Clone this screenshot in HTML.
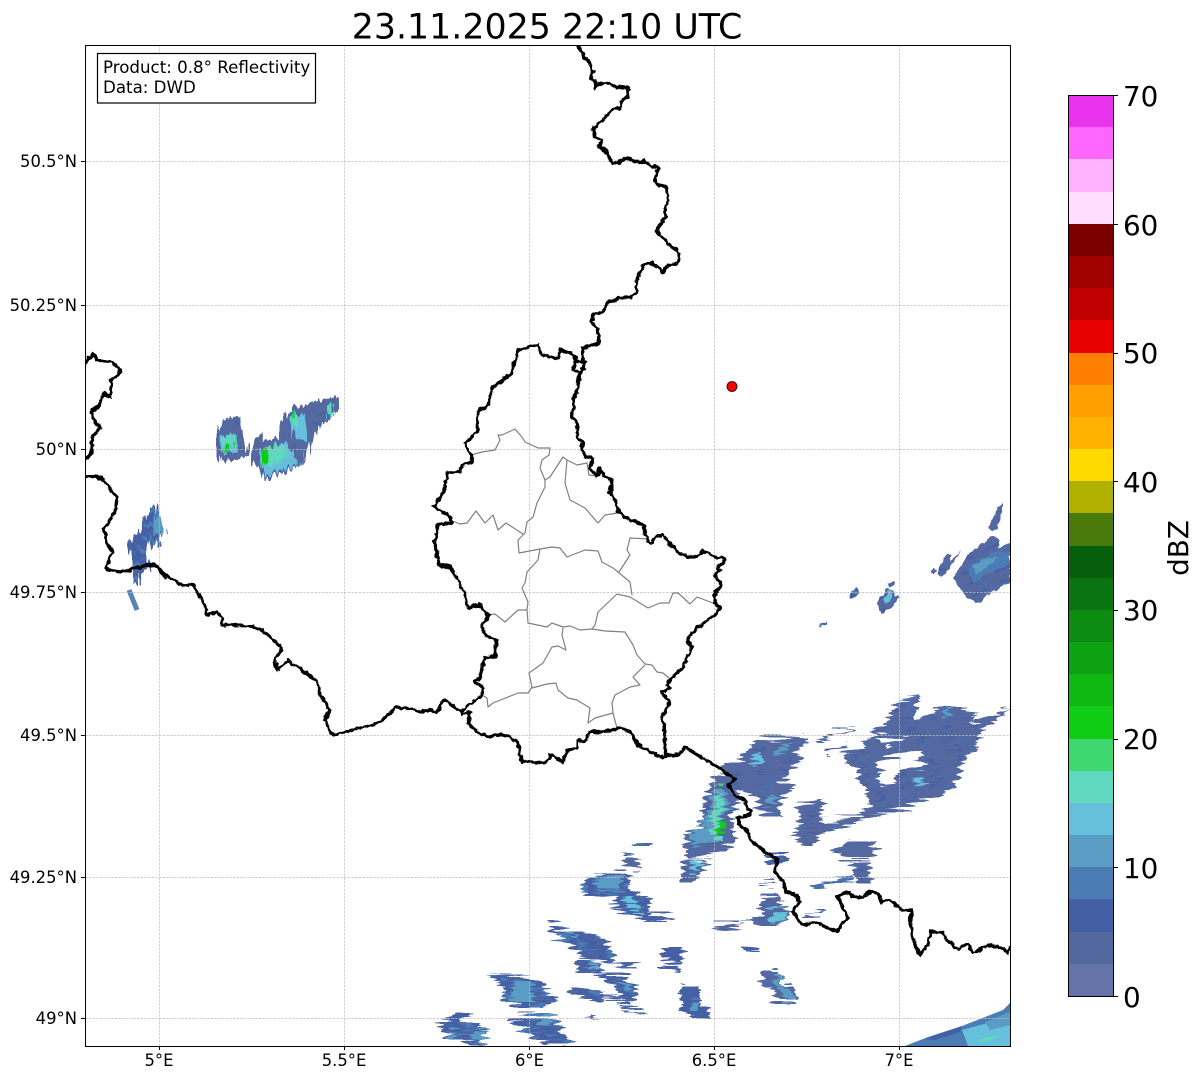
<!DOCTYPE html>
<html><head><meta charset="utf-8"><style>
html,body{margin:0;padding:0;background:#fff}
svg{display:block}
text{font-family:"DejaVu Sans",sans-serif;fill:#000}
.gr line{stroke:#bcbcbc;stroke-width:.7;stroke-dasharray:2.5 1.2}
.tk line{stroke:#000;stroke-width:1}
.bd{fill:none;stroke:#000;stroke-width:3.2;stroke-linejoin:round;stroke-linecap:round}
.pv{fill:none;stroke:#808080;stroke-width:1.2;stroke-linejoin:round}
.a{fill:url(#ph)}.r{fill:url(#pr)}.s{fill:url(#ps)}
.b{fill:#4460a4}.c{fill:#4c7cb4}.d{fill:#5a9cc4}.e{fill:#66c0dc}.f{fill:#60d8c0}.g{fill:#10cc14}.h{fill:#3fd870}
.l{fill:none;stroke:#4e66a4;stroke-width:2.5}
</style></head><body>
<svg width="1202" height="1081" viewBox="0 0 1202 1081" xmlns="http://www.w3.org/2000/svg">
<defs>
<pattern id="ph" width="26" height="12" patternUnits="userSpaceOnUse"><rect width="26" height="12" fill="#5468a0"/><rect y="3" width="12" height="2" fill="#4460a4"/><rect x="12" y="8" width="10" height="2" fill="#4c6eac"/></pattern>
<pattern id="pr" width="30" height="12" patternUnits="userSpaceOnUse" patternTransform="rotate(-25)"><rect width="30" height="12" fill="#5468a0"/><rect y="2" width="16" height="2" fill="#4460a4"/><rect x="8" y="8" width="16" height="2" fill="#4c70ae"/></pattern>
<pattern id="ps" width="30" height="14" patternUnits="userSpaceOnUse" patternTransform="rotate(18)"><rect width="30" height="14" fill="#4460a4"/><rect y="3" width="22" height="4" fill="#4c7cb4"/><rect x="6" y="10" width="20" height="2" fill="#5468a0"/></pattern>
<clipPath id="ax"><rect x="85.5" y="45.5" width="925" height="1001"/></clipPath>
<filter id="fh" filterUnits="userSpaceOnUse" x="85" y="45" width="926" height="1002"><feTurbulence type="fractalNoise" baseFrequency="0.02 0.3" numOctaves="2" seed="4" result="n"/><feDisplacementMap in="SourceGraphic" in2="n" scale="20" xChannelSelector="R" yChannelSelector="G"/></filter>
<filter id="fv" filterUnits="userSpaceOnUse" x="85" y="45" width="926" height="1002"><feTurbulence type="fractalNoise" baseFrequency="0.3 0.03" numOctaves="2" seed="7" result="n"/><feDisplacementMap in="SourceGraphic" in2="n" scale="14" xChannelSelector="G" yChannelSelector="R"/></filter>
<filter id="fw" filterUnits="userSpaceOnUse" x="85" y="45" width="926" height="1002"><feTurbulence type="fractalNoise" baseFrequency="0.18" numOctaves="2" seed="3" result="n"/><feDisplacementMap in="SourceGraphic" in2="n" scale="5" xChannelSelector="R" yChannelSelector="G"/></filter>
</defs>
<rect width="1202" height="1081" fill="#fff"/>
<g clip-path="url(#ax)">
<!-- radar -->
<g filter="url(#fv)">
<polygon class="a" points="221,418 241,417 243,435 247,445 247,455 236,460 225,462 224,457 219,463 217,447 219,428"/>
<polygon class="e" points="220,436 237,434 238,452 224,455 221,448"/>
<polygon class="f" points="221,438 232,436 234,446 224,448"/>
<rect class="g" x="225" y="444" width="6" height="9"/>
<polygon class="a" points="252,450 256,440 262,432 265,440 277,438 280,425 285,420 288,408 305,405 320,400 337,397 339,410 330,417 322,425 315,435 308,447 303,465 280,473 263,482 260,470 252,462"/>
<polygon class="e" points="260,449 285,442 295,452 300,464 280,470 264,478"/>
<polygon class="f" points="262,448 282,444 288,456 270,466 264,462"/>
<polygon class="e" points="288,415 306,413 308,440 296,440"/>
<polygon class="f" points="288,414 296,414 298,425 292,428"/>
<rect x="263" y="448" width="5" height="16" class="g"/><rect x="290" y="413" width="5" height="8" class="g"/>
<polygon class="f" points="326,404 335,404 334,417 328,418"/>
<polygon class="s" points="128,543 142,530 145,518 150,507 155,505 165,532 157,537 160,546 155,547 153,540 148,553 151,567 140,572 140,585 136,585 133,567 130,557"/>
<polygon class="d" points="153,515 160,516 164,532 156,535"/>
</g>
<polyline points="129,590 137,610" fill="none" stroke="#5a82b8" stroke-width="5"/>
<g filter="url(#fw)">
<polygon class="s" points="818,625 827,621 827,624 819,627"/>
<polygon class="s" points="849,598 852,591 857,587 859,592 855,597"/>
<polygon class="r" points="877,603 888,588 899,597 893,606 882,613"/>
<polygon class="e" points="883,600 890,590 892,596 886,605"/>
<polyline points="888,585 895,582" fill="none" stroke="#4e66a4" stroke-width="3"/>
<polygon class="r" points="953,578 968,555 993,535 1000,540 998,548 1010,542 1010,583 990,593 980,603 965,597"/>
<polygon class="c" points="968,568 995,552 1010,552 1010,565 985,575 974,583"/>
<polygon class="d" points="972,565 982,560 1000,556 985,568 975,575"/>
<polygon class="r" points="988,528 995,513 1003,503 1003,510 997,530 992,532"/>
<polygon class="r" points="938,572 947,553 952,555 950,562 962,550 948,570 942,577"/>
<polyline points="932,573 935,570" fill="none" stroke="#4e66a4" stroke-width="3"/>
</g>
<g filter="url(#fh)">
<polygon class="a" points="725,767 740,758 757,740 793,737 807,737 807,745 795,752 803,760 790,768 788,777 778,780 795,788 783,795 777,815 762,815 755,807 760,797 735,790 730,780"/>
<polygon class="e" points="750,760 762,750 765,765 752,768"/>
<polygon class="d" points="775,750 792,742 793,746 778,755"/>
<polygon class="d" points="765,795 775,795 775,805 767,805"/>
<polyline class="l" points="813,743 830,736 855,728"/>
<polyline class="l" points="828,751 847,745"/>
<polygon class="a" points="718,775 732,778 740,803 732,810 732,847 715,855 685,857 685,840 703,820 703,803 712,783"/>
<polygon class="d" points="715,785 724,790 728,805 720,825 712,842 695,848 690,840 708,815"/>
<polygon class="f" points="718,795 724,800 722,815 718,838 711,838 712,815"/>
<rect class="g" x="717" y="820" width="7" height="14"/><rect class="h" x="719" y="785" width="6" height="4"/>
<polygon class="a" points="683,862 705,860 707,868 697,875 697,880 681,880"/>
<polygon class="e" points="691,861 702,861 697,873 691,873"/>
<path class="r" fill-rule="evenodd" d="M843,755 860,748 877,737 873,732 890,715 900,700 917,695 915,722 930,712 947,705 977,713 973,722 1010,708 980,735 973,750 955,780 955,787 938,795 907,808 873,817 827,833 797,838 793,832 802,823 827,820 857,817 870,807 863,787 857,775 857,768 845,763Z M885,758 923,748 922,760 903,768 893,782 877,783 882,775 878,768Z M880,735 908,738 883,748Z"/>
<polygon class="e" points="913,778 921,774 926,785 917,789"/>
<polygon class="d" points="945,708 950,711 948,718 943,716"/>
<polygon class="a" points="798,805 825,797 823,815 823,822 800,825"/>
<polygon class="a" points="795,833 830,822 815,838 812,845 805,845 795,840"/>
<polygon class="a" points="830,853 847,840 877,843 870,855 843,858"/>
<polygon class="a" points="850,862 868,860 872,883 857,883"/>
<polyline points="812,890 853,877" fill="none" stroke="#4c70ae" stroke-width="5"/>
<polygon class="b" points="767,853 788,854 788,860 767,862"/>
<polygon class="a" points="760,897 776,893 777,905 787,907 787,922 777,928 760,928 750,920 760,913"/>
<polygon class="e" points="770,907 785,910 785,916 778,925 770,922"/>
<polyline class="l" points="758,883 775,882"/><polyline class="l" points="806,916 823,914"/>
<polyline class="l" points="713,928 740,925"/><polyline class="l" points="740,922 765,918"/><polyline points="660,915 675,921" fill="none" stroke="#4e66a4" stroke-width="5"/>
<polyline class="l" points="635,843 652,845" stroke-width="4"/>
<polygon class="a" points="623,855 641,858 639,868 624,866"/>
<polygon class="s" points="580,888 593,875 627,873 633,893 652,898 648,913 675,918 675,922 647,922 613,910 617,900 590,895"/>
<polygon class="d" points="592,880 620,877 624,890 598,888"/>
<polygon class="e" points="627,898 638,900 640,912 624,908"/>
<polygon class="s" points="548,923 605,938 613,952 612,962 583,958 580,952 555,937"/>
<polygon class="d" points="566,928 577,931 576,940 568,938"/>
<polyline class="l" points="612,960 640,966"/>
<polygon class="s" points="578,962 600,963 603,973 628,975 637,990 635,1003 625,1002 617,993 605,978 578,973"/>
<polygon class="d" points="590,963 600,964 598,970 590,968"/>
<polygon class="d" points="620,978 628,980 630,990 622,988"/>
<polygon class="s" points="572,988 602,992 603,1002 583,998 572,995"/>
<polyline class="l" points="600,995 630,1002"/><polyline class="l" points="623,1009 645,1012" stroke-width="3.5"/>
<polyline class="l" points="588,1017 598,1020"/>
<polygon class="b" points="663,947 683,947 682,963 663,961"/><polygon class="b" points="662,965 682,966 682,969 662,968"/>
<polygon class="b" points="680,988 700,988 700,1008 710,1008 710,1018 690,1017 678,1010"/>
<polygon class="d" points="690,1000 698,1000 698,1012 690,1012"/>
<polygon class="a" points="762,968 782,968 785,985 795,985 797,1002 775,1002 773,985 763,985"/>
<polygon class="d" points="777,975 782,975 785,988 793,992 794,1000 785,1000 778,985"/>
<polyline points="742,948 760,949" fill="none" stroke="#4460a4" stroke-width="3"/>
<polygon class="s" points="485,975 523,973 540,978 548,992 557,1000 538,1010 520,1010 500,1000 505,990 495,980"/>
<polygon class="d" points="515,978 530,980 535,1000 520,1006 510,998"/>
<polygon class="s" points="438,1023 457,1015 488,1028 482,1045 467,1046 447,1037"/>
<polygon class="d" points="450,1028 458,1032 455,1040 448,1036"/><polygon class="d" points="475,1028 486,1032 482,1042 472,1040"/>
<polygon class="s" points="505,1017 550,1015 562,1028 570,1042 568,1046 545,1046 525,1033"/>
<polygon class="d" points="540,1016 552,1016 550,1026 540,1024"/>
</g>
<polygon class="c" points="905,1046 928,1037 962,1026 1003,1010 1010,1003 1010,1046"/>
<polygon class="b" points="925,1039 962,1026 960,1032 935,1040"/>
<polygon class="e" points="962,1030 1010,1017 1010,1046 968,1046"/>
<polygon class="d" points="985,1022 1010,1012 1010,1025 990,1030"/>
<polygon class="f" points="978,1040 996,1035 996,1038 980,1043"/>
<!-- grid -->
<g class="gr">
<line x1="159.5" y1="45" x2="159.5" y2="1046"/><line x1="344.5" y1="45" x2="344.5" y2="1046"/><line x1="529.5" y1="45" x2="529.5" y2="1046"/><line x1="714.5" y1="45" x2="714.5" y2="1046"/><line x1="899.5" y1="45" x2="899.5" y2="1046"/>
<line x1="85" y1="161.5" x2="1010" y2="161.5"/><line x1="85" y1="305.5" x2="1010" y2="305.5"/><line x1="85" y1="449.5" x2="1010" y2="449.5"/><line x1="85" y1="592.5" x2="1010" y2="592.5"/><line x1="85" y1="735.5" x2="1010" y2="735.5"/><line x1="85" y1="877.5" x2="1010" y2="877.5"/><line x1="85" y1="1018.5" x2="1010" y2="1018.5"/>
</g>
<!-- provinces -->
<g class="pv">
<polyline points="471,455 482,452 495,450 500,440 498,435 502,435 515,429 522,437 525,442 538,448 550,448 549,455 542,460 540,468 545,480 545,487 537,503 533,517 527,522 525,533 518,540 519,553 540,549 552,547 560,548 567,557 585,550 598,551 602,562 613,568 618,572 630,582 632,595"/>
<polyline points="545,480 550,477 563,457 567,460 565,483 570,500 585,508 598,523 605,515 618,513"/>
<polyline points="567,460 577,465 587,463 589,475 597,476"/>
<polyline points="450,520 460,524 467,523 476,511 485,523 493,515 498,530 506,523 523,534"/>
<polyline points="649,539 630,538 627,550 630,555 619,572"/>
<polyline points="540,549 538,560 527,572 525,583 522,588 528,602 527,610 528,623 547,627 552,623 563,627 570,626 580,630 592,629 605,631 625,632 633,645 637,655 645,664 652,665 657,672 663,673 669,678"/>
<polyline points="617,594 630,597 648,608 660,603 669,603 673,593 678,593 690,604 697,597 713,603"/>
<polyline points="617,594 598,612 595,625 592,629"/>
<polyline points="527,610 518,610 505,622 495,614 488,615"/>
<polyline points="563,628 562,635 566,650 558,646 552,647 543,663 529,673 532,687 528,693 518,693 493,703 488,707 487,698 482,695"/>
<polyline points="532,688 547,684 556,683 558,690 568,698 577,700 590,708 588,723 595,718 613,713 617,728"/>
<polyline points="613,713 612,703 615,695 630,687 640,685 633,677 645,665"/>
</g>
<!-- borders -->
<g class="bd" filter="url(#fw)">
<polyline points="578,46 583,55 590,63 593,73 591,78 596,83 595,88 599,84 608,83 617,88 627,87 629,90 627,97 621,102 620,108 613,109 603,120 594,127 595,137 602,141 599,147 605,150 613,164 620,161 628,158 635,162 643,161 652,166 658,168 655,177 657,184 667,188 669,200 665,208 666,217 656,231 663,237 668,244 677,250 680,257 678,263 668,265 663,273 660,269 652,263 643,265 638,277 635,288 637,292 632,297 625,297 608,302 603,312 593,315 591,322 597,327 599,343 583,348 582,355 585,368 580,372 573,370 575,362 585,362 578,378 578,390 573,398 574,408 571,416 576,420 578,430 577,438 583,443 581,450 587,457 593,458 590,468 597,477 600,468 604,476 612,480 610,493 615,500 617,510 630,520 637,522 643,525 648,542 652,543 655,537 663,535 677,552 688,557 697,557 703,551 717,558 723,557 725,560 717,568 720,570 715,575 722,585 715,592 715,603 720,608 715,615 698,627 687,640 692,647 683,668 672,678 667,685 670,688 662,693 670,702 662,717 665,733 665,757"/>
<polyline points="576,360 575,355 560,350 557,359 542,355 538,345 518,350 512,373 493,387 488,405 478,412 477,433 465,443 471,455 472,463 462,465 460,472 448,473 443,493 434,506 450,517 452,523 438,525 435,542 439,565 450,567 458,580 466,597 467,607 480,605 488,615 482,627 485,635 496,640 495,657 485,657 480,677 475,682 483,688 482,695 462,710"/>
<polyline points="85,363 93,353 98,361 113,362 121,371 112,380 110,397 103,393 100,405 92,412 92,418 100,427 92,438 92,453 85,459"/>
<polyline points="85,475 102,478 117,498 115,513 104,528 106,540 112,552 106,568 110,570 125,572 138,567 155,565 167,577 183,586 193,585 205,605 207,615 217,612 222,618 222,625 250,626 262,630 282,648 275,660 277,670 288,660 318,682 320,695 330,710 325,720 333,735 345,732 360,728 380,722 395,708 410,708 420,712 430,710 437,713 443,700 460,710 462,714 470,712 468,723 478,733 490,737 497,734 510,737 518,742 521,760 523,762 537,762 545,764 550,755 563,762 567,750 577,748 577,741 585,741 590,732 610,731 620,728 630,732 638,745 652,753 663,758 667,755 678,755 685,748 690,750 700,756 718,767 732,777 735,779 728,785 735,795 745,800 747,808 752,812 747,817 738,817 740,825 748,832 750,840 767,853 777,860 775,872 784,882 785,892 797,895 799,902 793,912 802,925 817,923 837,932 842,925 847,917 843,907 838,897 847,892 858,898 870,892 877,893 882,902 890,900 902,910 912,910 910,923 915,945 920,955 928,945 930,932 942,932 947,940 958,949 968,944 973,953 988,945 1003,948 1008,953 1010,948"/>
</g>
<circle cx="732" cy="386.5" r="5" fill="#f00" stroke="#000" stroke-width="0.8"/>
<!-- legend -->
<rect x="97.5" y="53.5" width="218" height="49.5" fill="#fff" stroke="#000" stroke-width="1.2"/>
</g>
<text x="103" y="73" font-size="16.67">Product: 0.8° Reflectivity</text>
<text x="103" y="93" font-size="16.67">Data: DWD</text>
<rect x="85.5" y="45.5" width="925" height="1001" fill="none" stroke="#000" stroke-width="1"/>
<!-- ticks -->
<g class="tk">
<line x1="159.5" y1="1046" x2="159.5" y2="1050"/><line x1="344.5" y1="1046" x2="344.5" y2="1050"/><line x1="529.5" y1="1046" x2="529.5" y2="1050"/><line x1="714.5" y1="1046" x2="714.5" y2="1050"/><line x1="899.5" y1="1046" x2="899.5" y2="1050"/>
<line x1="81" y1="161.5" x2="85" y2="161.5"/><line x1="81" y1="305.5" x2="85" y2="305.5"/><line x1="81" y1="449.5" x2="85" y2="449.5"/><line x1="81" y1="592.5" x2="85" y2="592.5"/><line x1="81" y1="735.5" x2="85" y2="735.5"/><line x1="81" y1="877.5" x2="85" y2="877.5"/><line x1="81" y1="1018.5" x2="85" y2="1018.5"/>
</g>
<g font-size="16.4" text-anchor="end">
<text x="77" y="167">50.5°N</text><text x="77" y="311">50.25°N</text><text x="77" y="455">50°N</text><text x="77" y="598">49.75°N</text><text x="77" y="741">49.5°N</text><text x="77" y="883">49.25°N</text><text x="77" y="1024">49°N</text>
</g>
<g font-size="16.4" text-anchor="middle">
<text x="159" y="1066">5°E</text><text x="344" y="1066">5.5°E</text><text x="529.5" y="1066">6°E</text><text x="714" y="1066">6.5°E</text><text x="899" y="1066">7°E</text>
</g>
<text x="547" y="38.5" font-size="34.8" text-anchor="middle">23.11.2025 22:10 UTC</text>
<!-- colorbar -->
<g shape-rendering="crispEdges">
<rect x="1068" y="95" width="45" height="32" fill="#ea33ee"/>
<rect x="1068" y="127" width="45" height="32" fill="#ff66ff"/>
<rect x="1068" y="159" width="45" height="33" fill="#ffb3ff"/>
<rect x="1068" y="192" width="45" height="32" fill="#ffddff"/>
<rect x="1068" y="224" width="45" height="32" fill="#7a0000"/>
<rect x="1068" y="256" width="45" height="32" fill="#a00000"/>
<rect x="1068" y="288" width="45" height="32" fill="#c00000"/>
<rect x="1068" y="320" width="45" height="33" fill="#e60000"/>
<rect x="1068" y="353" width="45" height="32" fill="#ff7f00"/>
<rect x="1068" y="385" width="45" height="32" fill="#ff9f00"/>
<rect x="1068" y="417" width="45" height="32" fill="#ffb300"/>
<rect x="1068" y="449" width="45" height="32" fill="#ffd900"/>
<rect x="1068" y="481" width="45" height="32" fill="#b0b000"/>
<rect x="1068" y="513" width="45" height="33" fill="#4a7a0c"/>
<rect x="1068" y="546" width="45" height="32" fill="#065f0c"/>
<rect x="1068" y="578" width="45" height="32" fill="#0a7510"/>
<rect x="1068" y="610" width="45" height="32" fill="#0c8a12"/>
<rect x="1068" y="642" width="45" height="32" fill="#0ea212"/>
<rect x="1068" y="674" width="45" height="32" fill="#10b812"/>
<rect x="1068" y="706" width="45" height="33" fill="#10cc14"/>
<rect x="1068" y="739" width="45" height="32" fill="#3fd870"/>
<rect x="1068" y="771" width="45" height="32" fill="#60d8c0"/>
<rect x="1068" y="803" width="45" height="32" fill="#66c0dc"/>
<rect x="1068" y="835" width="45" height="32" fill="#5a9cc4"/>
<rect x="1068" y="867" width="45" height="32" fill="#4c7cb4"/>
<rect x="1068" y="899" width="45" height="33" fill="#4460a4"/>
<rect x="1068" y="932" width="45" height="32" fill="#5468a0"/>
<rect x="1068" y="964" width="45" height="32" fill="#6474a8"/>
</g>
<rect x="1068.5" y="95.5" width="45" height="901" fill="none" stroke="#000" stroke-width="1"/>
<g class="tk">
<line x1="1113" y1="95.5" x2="1118" y2="95.5"/><line x1="1113" y1="224.5" x2="1118" y2="224.5"/><line x1="1113" y1="353.5" x2="1118" y2="353.5"/><line x1="1113" y1="481.5" x2="1118" y2="481.5"/><line x1="1113" y1="610.5" x2="1118" y2="610.5"/><line x1="1113" y1="739.5" x2="1118" y2="739.5"/><line x1="1113" y1="867.5" x2="1118" y2="867.5"/><line x1="1113" y1="996.5" x2="1118" y2="996.5"/>
</g>
<g font-size="27.8">
<text x="1123" y="106">70</text><text x="1123" y="235">60</text><text x="1123" y="363">50</text><text x="1123" y="492">40</text><text x="1123" y="620">30</text><text x="1123" y="749">20</text><text x="1123" y="878">10</text><text x="1123" y="1007">0</text>
</g>
<text transform="translate(1188,548) rotate(-90)" font-size="27.8" text-anchor="middle">dBZ</text>
</svg>
</body></html>
